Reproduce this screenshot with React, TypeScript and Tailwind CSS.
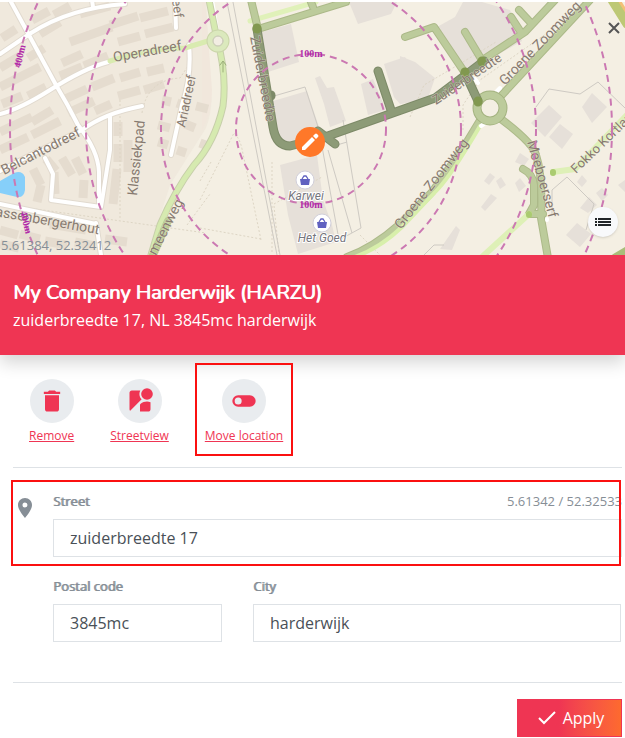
import type { ReactNode } from "react";

const TEXT = "font-['Open_Sans','Noto_Sans',sans-serif]";

type Label = { text: string; x: number; y: number; angle: number; size: number };

const streetLabels: Label[] = [
  { text: "Operadreef", x: 114, y: 62, angle: -10, size: 14 },
  { text: "Ariadreef", x: 185, y: 128, angle: -78, size: 13 },
  { text: "Klassiekpad", x: 137, y: 196, angle: -84, size: 14 },
  { text: "Belcantodreef", x: 4, y: 175, angle: -27, size: 14 },
  { text: "assenbergerhout", x: -5, y: 216, angle: 10, size: 14 },
  { text: "meenweg", x: 156, y: 256, angle: -63, size: 14 },
  { text: "eef", x: 172, y: 0, angle: 82, size: 13 },
  { text: "Zuiderbreedte", x: 250, y: 37, angle: 79, size: 14 },
  { text: "Zuiderbreedte", x: 436, y: 105, angle: -34, size: 13 },
  { text: "Groene Zoomweg", x: 505, y: 86, angle: -46, size: 14 },
  { text: "Groene Zoomweg", x: 401, y: 230, angle: -52, size: 14 },
  { text: "Meeboerserf", x: 527, y: 142, angle: 74, size: 14 },
  { text: "Fokko Kortlan", x: 576, y: 174, angle: -44, size: 13 },
];

const houseRows = [
  "M32 20l17-9M54 15l16-9M40 34l20-12M80 14l30-8M110 25l28-9M140 18l28-7M70 42l42-15M118 42l22-6M145 34l28-7",
  "M2 38l14-9M0 68l20-12M28 58l16-10M0 87l40-20M62 63l20-9M60 76l22-9M84 66l24-10M2 104l20-8M28 96l18-9",
  "M65 99l22-10M92 87l22-9M120 78l20-6M147 72l17-4M68 113l26-12M95 111l16-7M118 96l22-6M144 90l20-6M0 132l32-15M32 122l20-12M0 150l28-13M32 135l28-14",
  "M33 169l8 16M41 185l-4 17M46 159l10 12M54 172l1 22M62 158l10 17M75 158l8 16M84 180l-1 18M118 122v14M118 144v18M117 169l-4 35M128 140v32",
  "M162 100l9 2M177 103l9 3M158 125l12 3M185 124l10 4M158 142l10 3M177 150l9 3M200 143l8 3M196 106l12 3",
  "M0 230l18 5M20 234l20 5M45 241l22 4M75 242l20 4M105 239l22 3M0 244l19 4M50 224l36 6",
];

function MapCanvas() {
  return (
    <svg
      viewBox="0 2 625 253"
      preserveAspectRatio="xMidYMid slice"
      className="block h-[253px] w-full"
      role="img"
      aria-label="Map"
    >
      <rect width="625" height="260" fill="#f4efe3" />
      <path d="M0 0H206L211 90Q213 110 206 128L170 185L148 255H0Z" fill="#f0e9dd" />
      <path d="M205 0L212 90Q212 112 202 130V0Z" fill="#f1e7dc" />

      <g fill="none" stroke="#e5dccf" strokeWidth="9">
        {houseRows.map((d) => (
          <path key={d} d={d} />
        ))}
      </g>

      <g fill="#e6e0d9">
        <path d="M262 32L291 24L299 62L268 72Z" />
        <path d="M273 101L307 91L322 136L282 145L272 118Z" />
        <path d="M315 78L320 76L327 88L334 87L339 101L346 121L330 127L324 104Z" />
        <path d="M349 2H397L391 14L358 24Z" />
        <path d="M361 84L373 79L386 110L368 115Z" />
        <path d="M384 64L405 57L430 98L400 104L394 97Z" />
        <path d="M400 56L415 62L435 78L428 98L400 104Z" />
        <path d="M437 27L455 17L463 2H482L510 10L522 41L485 62L464 70Z" />
        <path d="M280 165L317 155L323 200L332 225L336 242L298 254L288 215Z" />
        <path d="M531 123L549 105L562 117L545 137Z" />
        <path d="M549 137L560 124L573 134L562 149Z" />
        <path d="M582 107L592 93L607 107L592 123Z" />
        <path d="M515 162L520 153L529 159L524 166Z" />
        <path d="M515 183L520 178L526 186L519 192ZM496 181L501 177L506 185L500 189ZM484 181L490 173L495 177L489 185ZM481 207L491 194L497 198L485 211Z" />
        <path d="M566 235L577 223L591 234L580 247ZM577 182L582 175L587 181L582 187ZM596 193L602 188L608 195L602 201ZM618 185L625 180V192Z" />
        <path d="M440 249L456 226L460 230L452 250ZM580 208L589 197L597 205L588 213Z" />
      </g>

      <path d="M0 181L14 173Q22 170 25 177V190Q24 198 17 197L0 193Z" fill="#86cffa" />

      <g fill="none" stroke="#ddd5c4" strokeWidth="1" strokeDasharray="2 2">
        <path d="M211 162L200 181M200 200L234 133Q240 139 242 149L261 240M272 162V254M142 113Q147 80 180 78L188 66M0 204L206 233M187 225L210 194M0 217L60 224M120 100V220M410 117L424 85Q470 58 496 42" />
        <path d="M200 228L261 239M274 206L279 254M274 204L322 177M360 235L380 255M463 130V105L480 80L570 17" />
      </g>

      <g fill="none" stroke="#cecac3" strokeWidth="1">
        <path d="M227 2L277 255M233 2L280 255" />
        <path d="M274 96L305 87L319 130L339 240L361 228L343 120M328 150L352 233M337 145L347 142" />
        <path d="M536 107L549 89L580 94L598 82L625 108M552 215V190L567 177L594 204L586 230M424 255L434 245H444" />
      </g>

      <g fill="none" strokeLinecap="round" strokeLinejoin="round">
        <g stroke="#e1dacf" strokeWidth="6">
          <path d="M10 0L56 85Q68 105 78 125Q98 150 99 172V204M0 54L31 33Q70 8 125 4M0 114Q20 109 50 90Q85 68 108 62M0 171Q30 155 55 143L82 130Q105 113 142 106M110 115V150L101 207L51 200L53 174L45 158M175 0L176 28M189 45Q192 75 182 105L171 155M96 223L101 255M0 204L96 224M92 0L93 7" />
        </g>
        <g stroke="#ffffff" strokeWidth="4">
          <path d="M10 0L56 85Q68 105 78 125Q98 150 99 172V204M0 54L31 33Q70 8 125 4M0 114Q20 109 50 90Q85 68 108 62M0 171Q30 155 55 143L82 130Q105 113 142 106M110 115V150L101 207L51 200L53 174L45 158M175 0L176 28M189 45Q192 75 182 105L171 155M96 223L101 255M0 204L96 224M92 0L93 7" />
        </g>
        <path d="M110 61Q150 48 185 48L208 41H216" stroke="#d9ebb0" strokeWidth="5" />
        <path d="M212 0L217 30" stroke="#ffffff" strokeWidth="4" />
        <g stroke="#c7cfaa" strokeWidth="7">
          <path d="M209 0L217 39Q227 74 223 106Q215 142 194 165Q175 190 160 225L151 255" />
        </g>
        <path d="M209 0L217 39Q227 74 223 106Q215 142 194 165Q175 190 160 225L151 255" stroke="#d6eab0" strokeWidth="5" />
        <path d="M168 221L153 255" stroke="#bacb91" strokeWidth="8" />
        <circle cx="218" cy="41" r="8" fill="#f2ede2" stroke="#cbd6aa" strokeWidth="7" />
        <circle cx="218" cy="41" r="8" stroke="#dbe9bd" strokeWidth="5" />
        <circle cx="218" cy="41" r="5" stroke="#cfcdc0" strokeWidth="1" />
        <path d="M223 72V62M220 65L223 61L226 65" stroke="#9bae79" strokeWidth="1" />
        <path d="M250 21L316 2" stroke="#e0f1b9" strokeWidth="5" />

        <g stroke="#acb989" strokeWidth="8">
          <path d="M251 0L258 29L346 2M311 2L313 7M405 37L434 27L465 73M465 32L483 62M481 61L525 32L555 0M511 17L522 34M519 10L531 23M501 96L590 0" />
          <path d="M482 117L465 145Q448 170 432 192L400 224Q373 248 347 257M501 119Q533 143 536 155Q543 176 541 218L548 258M523 169Q533 174 534 185V205L529 214H543" />
        </g>
        <g stroke="#bccb9b" strokeWidth="6">
          <path d="M251 0L258 29L346 2M311 2L313 7M405 37L434 27L465 73M465 32L483 62M481 61L525 32L555 0M511 17L522 34M519 10L531 23M501 96L590 0" />
          <path d="M482 117L465 145Q448 170 432 192L400 224Q373 248 347 257M501 119Q533 143 536 155Q543 176 541 218L548 258M523 169Q533 174 534 185V205L529 214H543" />
        </g>
        <path d="M480 126Q452 174 438 189L402 227Q380 248 355 257" stroke="#d8efab" strokeWidth="4" />
        <path d="M553 172L575 169L626 116M529 214L482 257" stroke="#def0b7" strokeWidth="6" />
        <path d="M475 79L478 83M481 126L484 124M547 219V220M497 91L500 88" stroke="#ffffff" strokeWidth="4" />
        <circle cx="490" cy="108" r="13" fill="#f4efe3" stroke="#a4b380" strokeWidth="9" />
        <circle cx="490" cy="108" r="13" stroke="#bccb9b" strokeWidth="7" />
        <path d="M614 0L630 25" stroke="#f3c078" strokeWidth="11" />
        <path d="M612 0L627 24" stroke="#bdc875" strokeWidth="9" />
        <path d="M615 257L630 248" stroke="#a9bd79" strokeWidth="7" />

        <path d="M257 29L273 127Q276 146 290 146L325 137L435 98L484 61M378 71L391 110M318 131L335 144M271 95V96M465 73L478 101" stroke="#7d8a68" strokeWidth="9" />
        <path d="M257 29L273 127Q276 146 290 146L325 137L435 98L484 61M378 71L391 110M318 131L335 144M465 73L478 101" stroke="#8d9b77" strokeWidth="7" />
        <path d="M257 28V29M465 72V73M482 61V62M478 101V102" stroke="#81984f" strokeWidth="9" />
        <path d="M529 214V215M553 172V173" stroke="#aacb70" strokeWidth="6" />
      </g>

      <g
        fontFamily="Roboto, sans-serif"
        fill="#877a70"
        stroke="#f4efe3"
        strokeWidth="1"
        strokeOpacity="0.5"
        paintOrder="stroke"
      >
        {streetLabels.map((l) => (
          <text key={`${l.text}${l.x}`} fontSize={l.size} transform={`translate(${l.x} ${l.y}) rotate(${l.angle})`}>
            {l.text}
          </text>
        ))}
      </g>

      <g fontFamily="Roboto, sans-serif" fontStyle="italic" fontSize="12" fill="#76767d" stroke="#ffffff" strokeWidth="2" paintOrder="stroke" textAnchor="middle">
        <text x="306" y="200">Karwei</text>
        <text x="322" y="242">Het Goed</text>
      </g>
      {[
        [305, 180],
        [322, 223],
      ].map(([x, y]) => (
        <g key={x} transform={`translate(${x} ${y})`}>
          <circle r="9" fill="#ffffff" stroke="#d1cfda" />
          <path d="M-5 -1H5L4 5H-4Z" fill="#6061c0" />
          <path d="M-3 -1L-1 -4H1L3 -1" fill="none" stroke="#6061c0" strokeWidth="1.3" />
        </g>
      ))}

      <g fill="none" stroke="#cb78b2" strokeWidth="2" strokeDasharray="7 5">
        {[75, 150, 225, 301].map((r) => (
          <circle key={r} cx="311" cy="129" r={r} />
        ))}
      </g>
      <g fontFamily="Liberation Serif, serif" fontWeight="bold" fontSize="10" fill="#b12ba9" textAnchor="middle">
        <text x="311" y="57">100m</text>
        <text x="311" y="208">100m</text>
        <text transform="translate(23 57) rotate(-76)">400m</text>
        <text transform="translate(23 223) rotate(76)">400m</text>
      </g>

      <g transform="translate(310 142)">
        <circle r="15" fill="#ff7829" />
        <path d="M-8 5V8H-5L5 -2L2 -5ZM3 -6L6 -3L8 -5Q9 -6 8 -7L7 -8Q6 -9 5 -8Z" fill="#ffffff" />
      </g>
    </svg>
  );
}

function Action({ label, children, framed }: { label: string; children: ReactNode; framed?: boolean }) {
  return (
    <button type="button" className="relative flex cursor-pointer flex-col items-center gap-1 text-[#ef3553]">
      <span className="flex size-11 items-center justify-center rounded-full bg-[#e9ecef]">
        <svg viewBox="0 0 24 24" className="size-7" fill="currentColor" aria-hidden="true">
          {children}
        </svg>
      </span>
      <span className="text-xs leading-[18px] underline">{label}</span>
      {framed && <span className="pointer-events-none absolute -inset-x-[10px] -top-4 -bottom-[11px] border-2 border-[#fb1010]" />}
    </button>
  );
}

function Field({ id, label, value, note }: { id: string; label: string; value: string; note?: string }) {
  return (
    <div className="min-w-0">
      <div className="mb-2 flex justify-between text-[13px] leading-5 text-[#868e96]">
        <label htmlFor={id} className="[text-shadow:1px_0_0_#868e96]">
          {label}
        </label>
        {note && <span>{note}</span>}
      </div>
      <input
        id={id}
        type="text"
        defaultValue={value}
        className="h-[38px] w-full border border-[#dee2e6] bg-white px-4 text-base text-[#495057] outline-none"
      />
    </div>
  );
}

export default function App() {
  return (
    <main className={`${TEXT} bg-white pt-[2px]`}>
      <section className="relative">
        <MapCanvas />
        <button type="button" aria-label="Close" className="absolute top-[18px] right-[3px] flex size-4 items-center justify-center text-[#555555]">
          <svg viewBox="0 0 16 16" className="size-4" fill="none" stroke="currentColor" strokeWidth="2" aria-hidden="true">
            <path d="M3 3L13 13M13 3L3 13" />
          </svg>
        </button>
        <button type="button" aria-label="List" className="absolute right-[7px] bottom-[18px] flex size-[30px] items-center justify-center rounded-full bg-[#f8f9fb] text-[#212529] shadow-sm">
          <svg viewBox="0 0 16 16" className="size-4" fill="currentColor" aria-hidden="true">
            <path d="M0 4H2V6H0ZM3 4H16V6H3ZM0 7H2V9H0ZM3 7H16V9H3ZM0 10H2V12H0ZM3 10H16V12H3Z" />
          </svg>
        </button>
        <span className="absolute bottom-0 left-px text-[13px] leading-5 text-[#868e96]">5.61384, 52.32412</span>
      </section>

      <header className="h-[100px] bg-[#ef3553] px-[13px] pt-6 text-white shadow-[0_8px_16px_rgba(0,0,0,0.16)]">
        <h1 className="font-['Nunito','Lato',sans-serif] text-xl leading-[27px] font-normal [text-shadow:1px_0_0_#fff]">
          My Company Harderwijk (HARZU)
        </h1>
        <p className="text-base leading-7">zuiderbreedte 17, NL 3845mc harderwijk</p>
      </header>

      <div className="pr-[3px] pl-[13px]">
        <nav className="flex h-[113px] items-start gap-9 border-b border-[#dee2e6] pt-6 pl-4">
          <Action label="Remove">
            <path d="M6 19c0 1.100.9 2 2 2h8c1.100 0 2-.9 2-2V7H6v12zM19 4h-3.500l-1-1h-5l-1 1H5v2h14V4z" />
          </Action>
          <Action label="Streetview">
            <path d="M12.560 14.330c-.34.270-.56.700-.56 1.170V21h7c1.100 0 2-.9 2-2v-5.980c-.94-.33-1.950-.52-3-.52-2.030 0-3.930.7-5.440 1.830z" />
            <circle cx="18" cy="6" r="5" />
            <path d="M11.500 6c0-1.080.270-2.100.74-3H5c-1.100 0-2 .9-2 2v14c0 .55.230 1.050.59 1.410l9.820-9.820C12.230 9.420 11.500 7.800 11.500 6z" />
          </Action>
          <Action label="Move location" framed>
            <path fillRule="evenodd" d="M7 7h10a5 5 0 0 1 0 10H7A5 5 0 0 1 7 7zm0 2a3 3 0 1 0 0 6 3 3 0 0 0 0-6z" />
          </Action>
        </nav>

        <form onSubmit={(e) => e.preventDefault()}>
          <div className="relative grid grid-cols-[24px_1fr] gap-x-4 pt-[23px]">
            <svg viewBox="0 0 24 24" className="mt-[5px] size-6 fill-[#868e96]" aria-hidden="true">
              <path d="M12 2C8.130 2 5 5.130 5 9c0 5.250 7 13 7 13s7-7.750 7-13c0-3.870-3.130-7-7-7zm0 9.500a2.500 2.500 0 1 1 0-5 2.500 2.500 0 0 1 0 5z" />
            </svg>
            <Field id="street" label="Street" value="zuiderbreedte 17" note="5.61342 / 52.32533" />
            <span className="pointer-events-none absolute top-3 right-px -bottom-[9px] -left-[2px] border-2 border-[#fb1010]" />
          </div>
          <div className="mt-[19px] mr-px ml-10 grid grid-cols-[169px_1fr] gap-x-[31px]">
            <Field id="postal" label="Postal code" value="3845mc" />
            <Field id="city" label="City" value="harderwijk" />
          </div>
          <div className="mt-10 flex justify-end border-t border-[#dee2e6] pt-4">
            <button type="submit" className="flex h-[38px] w-[105px] items-center justify-center gap-1 border border-[#ef3553] bg-linear-to-r from-[#ef3553] from-40% to-[#fd6a2e] text-base text-white">
              <svg viewBox="0 0 24 24" className="size-6" fill="none" stroke="currentColor" strokeWidth="2" aria-hidden="true">
                <path d="M4 12L9 17L20 6" />
              </svg>
              Apply
            </button>
          </div>
        </form>
      </div>
    </main>
  );
}
